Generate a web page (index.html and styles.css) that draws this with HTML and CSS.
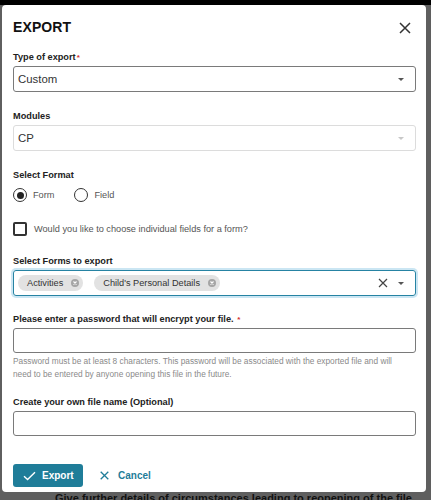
FILE: index.html
```html
<!DOCTYPE html>
<html>
<head>
<meta charset="utf-8">
<link rel="stylesheet" href="styles.css">
</head>
<body>
<div class="page">
  <div class="page-top"></div>
  <div class="page-content">
    <p class="page-text">Give further details of circumstances leading to reopening of the file</p>
  </div>
</div>
<div class="dialog">
  <div class="dialog-header">
    <h2 class="dialog-title">EXPORT</h2>
    <svg class="close-icon" width="12" height="12" viewBox="0 0 12 12"><path d="M1 1L11 11M11 1L1 11" stroke="#333" stroke-width="1.5" fill="none"/></svg>
  </div>

  <div class="field field-first">
    <div class="label">Type of export<span class="req">*</span></div>
    <div class="select">
      <span class="select-value">Custom</span>
      <span class="caret"></span>
    </div>
  </div>

  <div class="field">
    <div class="label">Modules</div>
    <div class="select select-disabled">
      <span class="select-value">CP</span>
      <span class="caret caret-light"></span>
    </div>
  </div>

  <div class="field">
    <div class="label">Select Format</div>
    <div class="radio-row">
      <div class="radio-item"><span class="radio radio-checked"></span><span class="opt-text">Form</span></div>
      <div class="radio-item"><span class="radio"></span><span class="opt-text">Field</span></div>
    </div>
  </div>

  <div class="check-row">
    <span class="checkbox"></span><span class="opt-text">Would you like to choose individual fields for a form?</span>
  </div>

  <div class="field field-forms">
    <div class="label">Select Forms to export</div>
    <div class="multi">
      <div class="chips">
        <span class="chip">Activities<span class="chip-x"><svg width="8" height="8" viewBox="0 0 8 8"><path d="M2.5 2.5L5.5 5.5M5.5 2.5L2.5 5.5" stroke="#fff" stroke-width="1.1"/></svg></span></span>
        <span class="chip">Child's Personal Details<span class="chip-x"><svg width="8" height="8" viewBox="0 0 8 8"><path d="M2.5 2.5L5.5 5.5M5.5 2.5L2.5 5.5" stroke="#fff" stroke-width="1.1"/></svg></span></span>
      </div>
      <svg class="clear-icon" width="10" height="10" viewBox="0 0 10 10"><path d="M1 1L9 9M9 1L1 9" stroke="#444" stroke-width="1.2" fill="none"/></svg>
      <span class="caret"></span>
    </div>
  </div>

  <div class="field field-pw">
    <div class="label">Please enter a password that will encrypt your file. <span class="req">*</span></div>
    <div class="input"></div>
    <p class="help">Password must be at least 8 characters. This password will be associated with the exported file and will need to be entered by anyone opening this file in the future.</p>
  </div>

  <div class="field field-name">
    <div class="label">Create your own file name (Optional)</div>
    <div class="input"></div>
  </div>

  <div class="actions">
    <button class="btn-primary"><svg width="13" height="10" viewBox="0 0 13 10"><path d="M1 5.2L4.6 8.6L12 1.2" stroke="#fff" stroke-width="1.4" fill="none"/></svg>Export</button>
    <button class="btn-link"><svg width="9" height="9" viewBox="0 0 9 9"><path d="M0.7 0.7L8.3 8.3M8.3 0.7L0.7 8.3" stroke="#1f7d99" stroke-width="1.3" fill="none"/></svg>Cancel</button>
  </div>
</div>
</body>
</html>
```

FILE: styles.css
```css
* { box-sizing: border-box; }

html, body {
  margin: 0;
  padding: 0;
}

body {
  width: 431px;
  height: 500px;
  overflow: hidden;
  background: #5f5f5f;
  font-family: "Liberation Sans", Arial, sans-serif;
  color: #222;
}

.page-top {
  height: 5px;
  background: #000;
}

.page-content {
  padding: 487px 0 0 55px;
}

.page-text {
  margin: 0;
  font-size: 11px;
  line-height: 13px;
  font-weight: bold;
  color: #111;
  white-space: nowrap;
}

.dialog {
  position: absolute;
  top: 5px;
  left: 2px;
  width: 424px;
  height: 487px;
  background: #fff;
  border-radius: 4px;
  padding: 14px 10px 0 11px;
  display: flex;
  flex-direction: column;
}

.dialog-header {
  display: flex;
  align-items: center;
  justify-content: space-between;
  height: 16px;
}

.dialog-title {
  margin: 0;
  font-size: 14px;
  line-height: 16px;
  font-weight: bold;
  color: #111;
  letter-spacing: 0.1px;
}

.close-icon {
  margin-right: 5px;
  margin-top: 1px;
}

.field {
  margin-top: 19px;
  display: flex;
  flex-direction: column;
}

.field-first { margin-top: 17px; }
.field-forms { margin-top: 20px; }
.field-pw { margin-top: 18px; }
.field-name { margin-top: 16px; }

.label {
  font-size: 9.2px;
  line-height: 11px;
  font-weight: bold;
  color: #222;
  margin-bottom: 3px;
}

.req {
  color: #d32f2f;
  font-size: 8px;
  vertical-align: top;
  margin-left: 1px;
}

.select {
  height: 26px;
  border: 1px solid #7a7a7a;
  border-radius: 3px;
  display: flex;
  align-items: center;
  padding: 0 11px 0 4px;
}

.select-disabled {
  border-color: #dcdcdc;
}

.select-value {
  flex: 1;
  font-size: 11.4px;
  color: #333;
}

.caret {
  width: 0;
  height: 0;
  border-left: 3px solid transparent;
  border-right: 3px solid transparent;
  border-top: 3.5px solid #555;
}

.caret-light {
  border-top-color: #c8c8c8;
}

.radio-row {
  display: flex;
  gap: 20px;
  margin-top: 4px;
}

.radio-item {
  display: flex;
  align-items: center;
  gap: 6px;
  height: 14px;
}

.radio {
  width: 14px;
  height: 14px;
  border: 1.5px solid #333;
  border-radius: 50%;
  display: flex;
  align-items: center;
  justify-content: center;
}

.radio-checked::after {
  content: "";
  width: 7px;
  height: 7px;
  border-radius: 50%;
  background: #222;
}

.opt-text {
  font-size: 9.2px;
  color: #555;
}

.check-row {
  display: flex;
  align-items: center;
  gap: 7px;
  margin-top: 20px;
  height: 14px;
}

.checkbox {
  width: 14px;
  height: 14px;
  border: 2px solid #333;
  border-radius: 2px;
}

.multi {
  height: 26px;
  border: 1px solid #2683a3;
  border-radius: 3px;
  box-shadow: 0 0 0 2px rgba(140, 200, 228, 0.45);
  display: flex;
  align-items: center;
  padding: 0 11px 0 4px;
}

.chips {
  flex: 1;
  display: flex;
  gap: 11px;
}

.chip {
  display: inline-flex;
  align-items: center;
  height: 16px;
  padding: 0 4px 0 9px;
  background: #e2e2e2;
  border-radius: 8px;
  font-size: 9.2px;
  color: #333;
}

.chip-x {
  width: 8px;
  height: 8px;
  border-radius: 50%;
  background: #a5a5a5;
  margin-left: 8px;
  display: flex;
}

.clear-icon {
  margin-right: 10px;
}

.input {
  height: 25px;
  border: 1px solid #7a7a7a;
  border-radius: 3px;
}

.help {
  margin: 2px 0 0;
  padding-right: 6px;
  font-size: 8.3px;
  line-height: 13px;
  color: #8a8a8a;
}

.actions {
  display: flex;
  align-items: center;
  gap: 17px;
  margin-top: 28px;
}

.btn-primary {
  width: 70px;
  height: 23px;
  border: none;
  border-radius: 3px;
  background: #1f7d99;
  color: #fff;
  font-family: "Liberation Sans", Arial, sans-serif;
  font-size: 10px;
  font-weight: bold;
  display: flex;
  align-items: center;
  gap: 6px;
  padding: 0 0 0 10px;
}

.btn-link {
  border: none;
  background: none;
  color: #1f7d99;
  font-family: "Liberation Sans", Arial, sans-serif;
  font-size: 10px;
  font-weight: bold;
  display: flex;
  align-items: center;
  gap: 9px;
  padding: 0;
}
```
